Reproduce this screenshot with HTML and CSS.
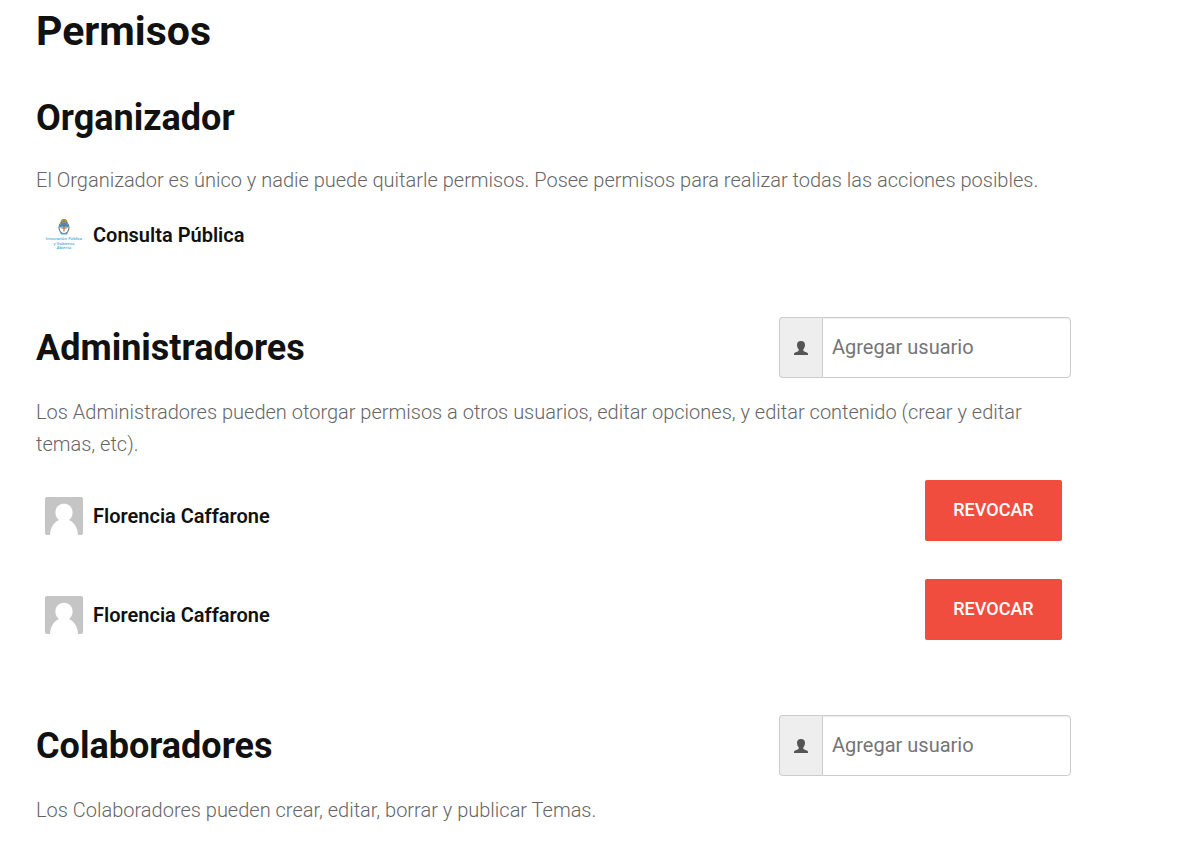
FILE: index.html
```html
<!DOCTYPE html>
<html lang="es">
<head>
<meta charset="utf-8">
<title>Permisos</title>
<link rel="stylesheet" href="styles.css">
</head>
<body>
<svg class="defs" aria-hidden="true">
  <symbol id="person" viewBox="0 0 14 14"><path d="M7 0C4.300 0 3 1.300 3 3.800C3 5.900 3.800 7.500 4.700 8.500V9.500C4.700 9.900 4.300 10.200 3.700 10.400L1.200 11.400C.4 11.700 0 12.200 0 13V14H14V13C14 12.200 13.600 11.700 12.800 11.400L10.300 10.400C9.700 10.200 9.300 9.900 9.300 9.500V8.500C10.200 7.500 11 5.900 11 3.800C11 1.300 9.700 0 7 0Z"/></symbol>
  <symbol id="avatar" viewBox="0 0 38 38"><rect width="38" height="38" rx="2" fill="#c5c5c5"/><path fill="#fff" d="M19 6.800C14 6.800 10.400 10.400 10.400 15.400C10.400 18.800 12 21.500 14 23C8.500 25.500 5.300 31 5 38H33C32.700 31 29.500 25.500 24 23C26 21.500 27.600 18.800 27.600 15.400C27.600 10.400 24 6.800 19 6.800Z"/></symbol>
</svg>
<main class="page">
  <h1 class="title">Permisos</h1>
  <section class="section">
    <h2 class="heading">Organizador</h2>
    <p class="text">El Organizador es único y nadie puede quitarle permisos. Posee permisos para realizar todas las acciones posibles.</p>
    <div class="user">
      <svg class="avatar" viewBox="0 0 38 38">
        <path d="M15.500 7Q16 3 19 3Q22 3 22.500 7Z" fill="#b08a3c"/>
        <ellipse cx="19" cy="11.500" rx="5.500" ry="6.500" fill="#53705c"/>
        <ellipse cx="19" cy="11.500" rx="4.500" ry="5.500" fill="#fff"/>
        <path d="M14.500 11.500A4.500 5.500 0 0 1 23.500 11.500Z" fill="#3b8fc4"/>
        <path d="M16.500 10.500H21.500V13H16.500Z" fill="#d8a48c"/>
        <path d="M18.500 7.500H19.500V15.500H18.500Z" fill="#a0654a"/>
        <path d="M14.500 15.500Q19 19 23.500 15.500L22 18.500H16Z" fill="#4ba3d8"/>
        <path d="M15.500 6.500Q16 3 19 3Q22 3 22.500 6.500Q19 5 15.500 6.500Z" fill="#b08a3c"/>
        <g class="logo-text"><text x="19" y="24">Innovación Pública</text><text x="19" y="29">y Gobierno</text><text x="19" y="33">Abierto</text></g>
      </svg>
      <strong class="name">Consulta Pública</strong>
    </div>
  </section>
  <section class="section">
    <div class="bar">
      <h2 class="heading">Administradores</h2>
      <label class="field"><span class="addon"><svg class="icon" role="img" aria-label="Usuario"><use href="#person"/></svg></span><input class="input" type="text" placeholder="Agregar usuario"></label>
    </div>
    <p class="text">Los Administradores pueden otorgar permisos a otros usuarios, editar opciones, y editar contenido (crear y editar temas, etc).</p>
    <ul class="list">
      <li class="row"><div class="user"><svg class="avatar" aria-hidden="true"><use href="#avatar"/></svg><strong class="name">Florencia Caffarone</strong></div><button class="revoke" type="button">REVOCAR</button></li>
      <li class="row"><div class="user"><svg class="avatar" aria-hidden="true"><use href="#avatar"/></svg><strong class="name">Florencia Caffarone</strong></div><button class="revoke" type="button">REVOCAR</button></li>
    </ul>
  </section>
  <section class="section">
    <div class="bar">
      <h2 class="heading">Colaboradores</h2>
      <label class="field"><span class="addon"><svg class="icon" role="img" aria-label="Usuario"><use href="#person"/></svg></span><input class="input" type="text" placeholder="Agregar usuario"></label>
    </div>
    <p class="text">Los Colaboradores pueden crear, editar, borrar y publicar Temas.</p>
  </section>
</main>
</body>
</html>
```
FILE: styles.css
```css
* { box-sizing: border-box; }
body { margin: 0; background: #fff; color: #111; font-family: Roboto, sans-serif; font-size: 20px; line-height: 32px; }
.defs { position: absolute; width: 0; height: 0; }
.page { max-width: 1071px; padding: 8px 0 18px 36px; }
.title { margin: 0 0 38px; font-size: 41px; line-height: 46px; font-weight: 700; }
.heading { margin: 0; font-size: 36px; line-height: 52px; font-weight: 700; }
.text { margin: 0; color: #666; font-weight: 300; }
.section { display: flex; flex-direction: column; gap: 20px; margin-bottom: 63px; }
.section:last-child { margin-bottom: 0; }
.bar { display: flex; justify-content: space-between; align-items: center; }
.bar + .text { margin-top: -2px; }
.user { display: flex; align-items: center; gap: 10px; padding-left: 9px; }
.avatar { width: 38px; height: 38px; }
.logo-text { fill: #35a8dc; font: 600 4px/4px "Open Sans", sans-serif; text-anchor: middle; }
.name { font-weight: 600; }
.field { display: flex; width: 292px; height: 61px; }
.addon { display: flex; align-items: center; justify-content: center; width: 43px; background: #eee; border: 1px solid #ccc; border-right: 0; border-radius: 4px 0 0 4px; }
.icon { width: 14px; height: 14px; fill: #555; }
.input { flex: 1; min-width: 0; padding: 0 9px 2px; border: 1px solid #ccc; border-radius: 0 4px 4px 0; box-shadow: inset 0 1px 1px rgba(0,0,0,.075); font: inherit; color: #555; }
.input::placeholder { color: #757575; opacity: 1; }
.list { display: flex; flex-direction: column; gap: 38px; margin: 0; padding: 0 0 12px; list-style: none; }
.row { display: flex; justify-content: space-between; align-items: flex-start; padding-right: 9px; }
.row .user { padding-top: 17px; }
.revoke { min-width: 137px; padding: 0 24px 2px; height: 61px; border: 0; border-radius: 2px; background: #f04d3f; color: #fff; font: 500 18px/32px Roboto, sans-serif; }
```
